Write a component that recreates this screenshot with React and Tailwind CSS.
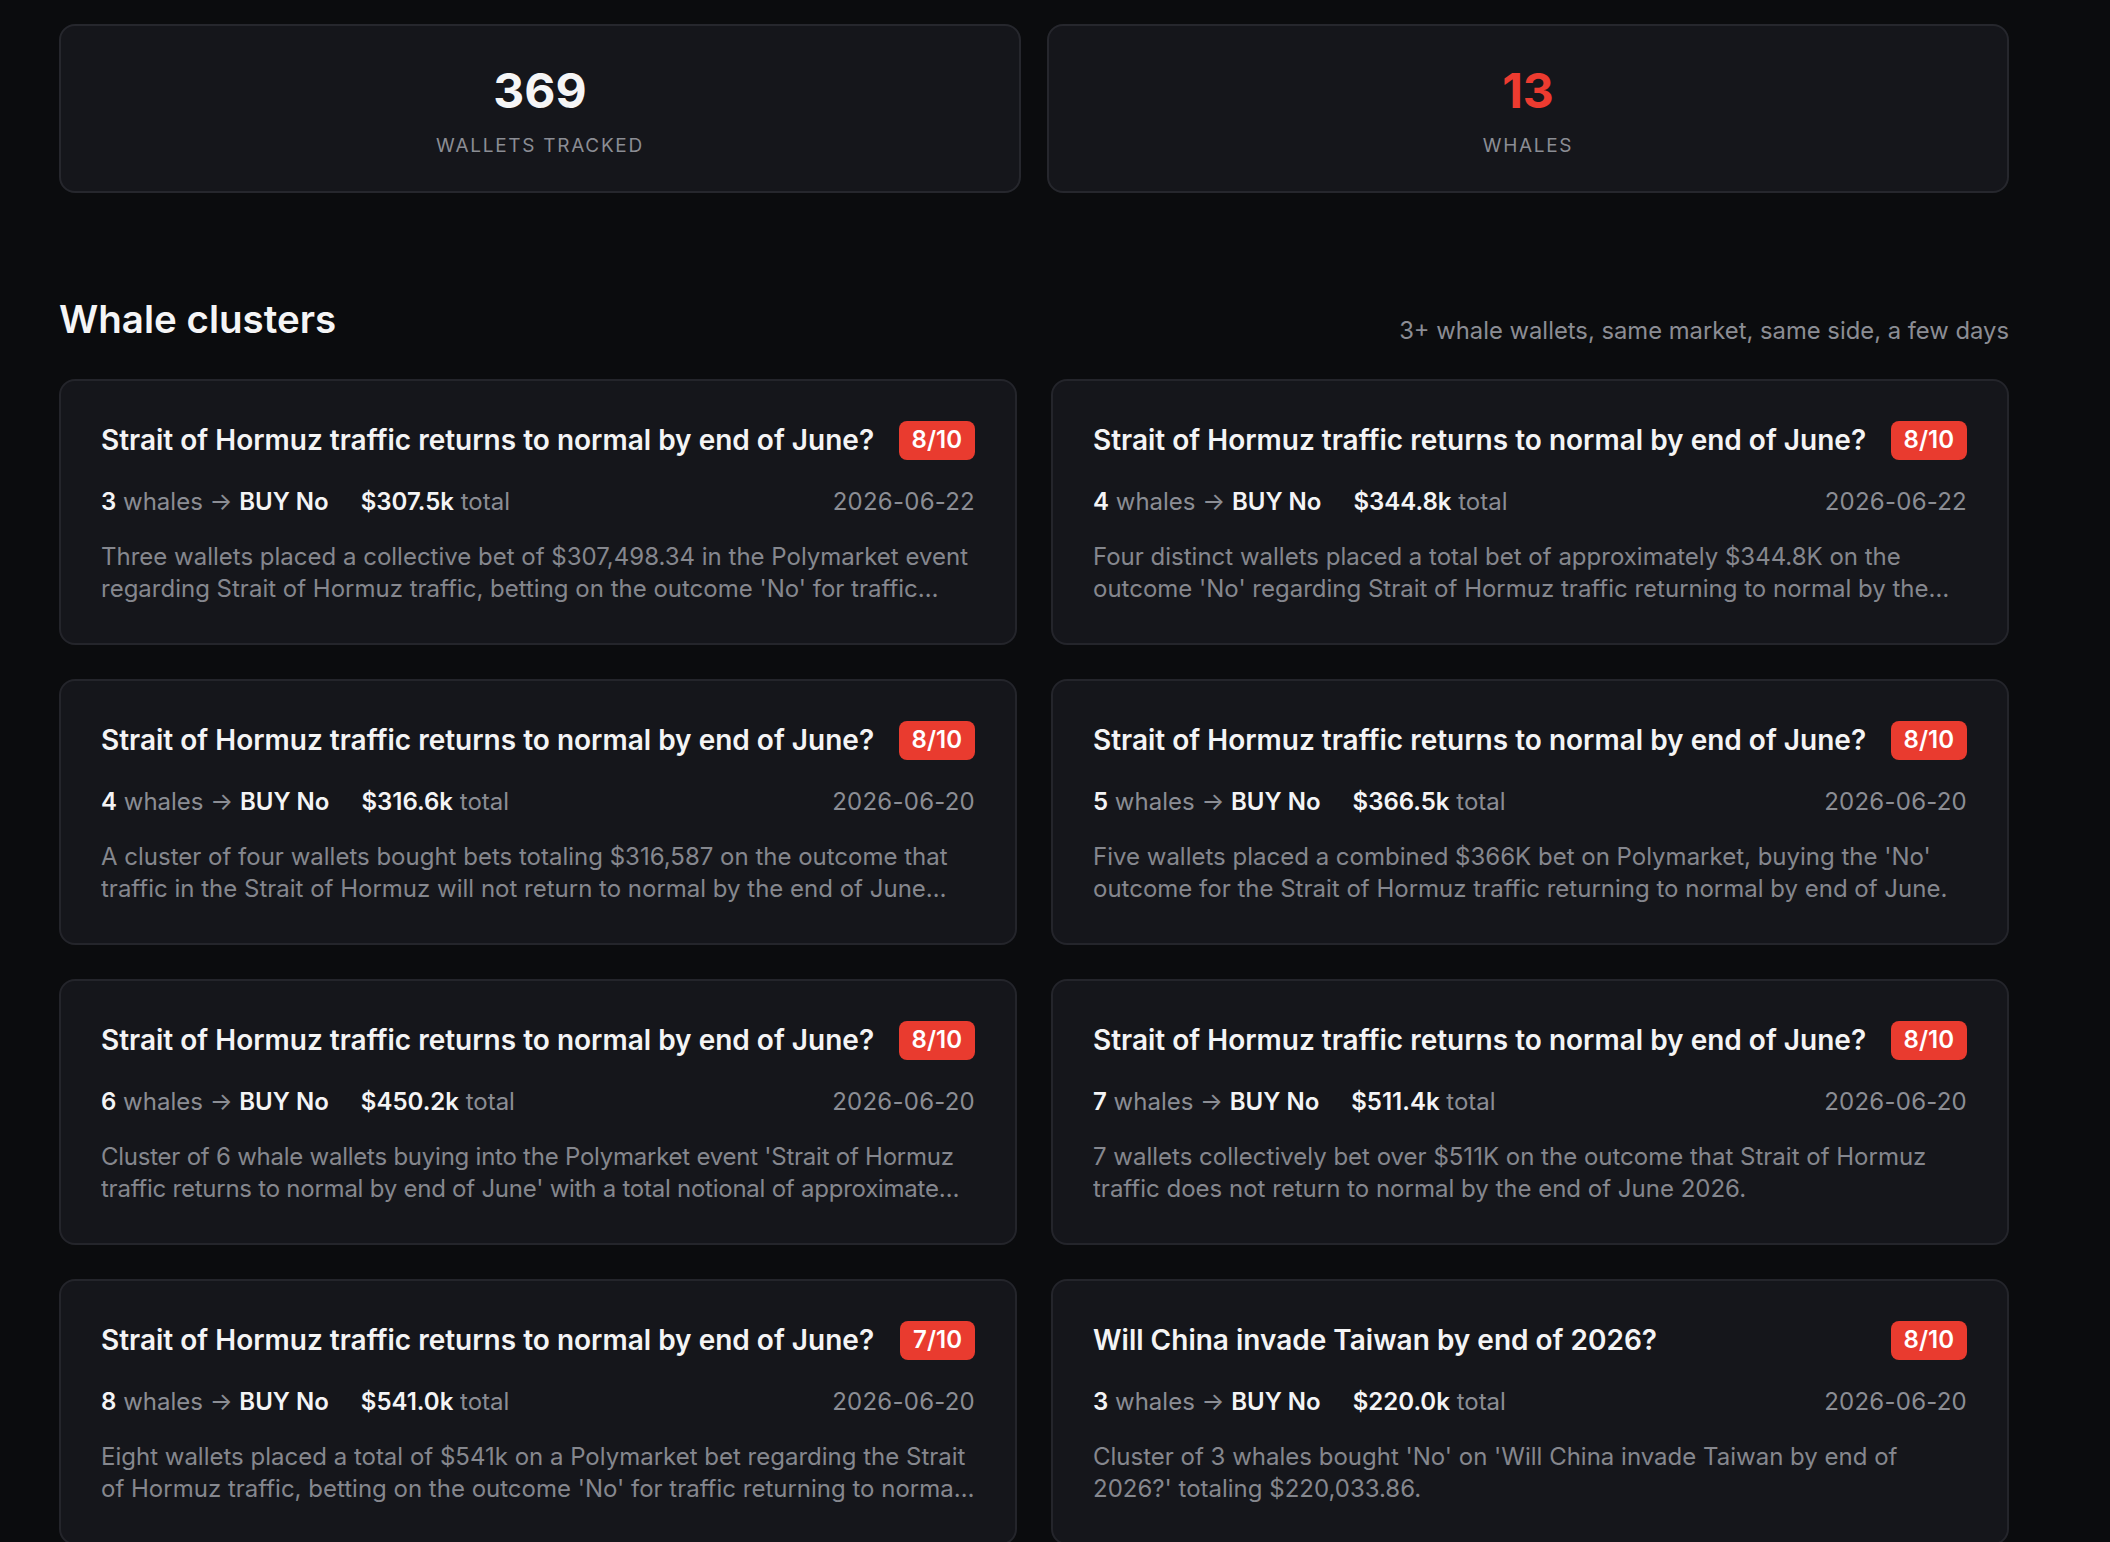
const clusters = [
  {
    title: "Strait of Hormuz traffic returns to normal by end of June?",
    score: "8/10",
    whales: 3,
    total: "$307.5k",
    date: "2026-06-22",
    summary:
      "Three wallets placed a collective bet of $307,498.34 in the Polymarket event regarding Strait of Hormuz traffic, betting on the outcome 'No' for traffic returning to normal by end of June.",
  },
  {
    title: "Strait of Hormuz traffic returns to normal by end of June?",
    score: "8/10",
    whales: 4,
    total: "$344.8k",
    date: "2026-06-22",
    summary:
      "Four distinct wallets placed a total bet of approximately $344.8K on the outcome 'No' regarding Strait of Hormuz traffic returning to normal by the end of June.",
  },
  {
    title: "Strait of Hormuz traffic returns to normal by end of June?",
    score: "8/10",
    whales: 4,
    total: "$316.6k",
    date: "2026-06-20",
    summary:
      "A cluster of four wallets bought bets totaling $316,587 on the outcome that traffic in the Strait of Hormuz will not return to normal by the end of June amid ongoing tensions.",
  },
  {
    title: "Strait of Hormuz traffic returns to normal by end of June?",
    score: "8/10",
    whales: 5,
    total: "$366.5k",
    date: "2026-06-20",
    summary:
      "Five wallets placed a combined $366K bet on Polymarket, buying the 'No' outcome for the Strait of Hormuz traffic returning to normal by end of June.",
  },
  {
    title: "Strait of Hormuz traffic returns to normal by end of June?",
    score: "8/10",
    whales: 6,
    total: "$450.2k",
    date: "2026-06-20",
    summary:
      "Cluster of 6 whale wallets buying into the Polymarket event 'Strait of Hormuz traffic returns to normal by end of June' with a total notional of approximate…",
    tight: true,
  },
  {
    title: "Strait of Hormuz traffic returns to normal by end of June?",
    score: "8/10",
    whales: 7,
    total: "$511.4k",
    date: "2026-06-20",
    summary:
      "7 wallets collectively bet over $511K on the outcome that Strait of Hormuz traffic does not return to normal by the end of June 2026.",
  },
  {
    title: "Strait of Hormuz traffic returns to normal by end of June?",
    score: "7/10",
    whales: 8,
    total: "$541.0k",
    date: "2026-06-20",
    summary:
      "Eight wallets placed a total of $541k on a Polymarket bet regarding the Strait of Hormuz traffic, betting on the outcome 'No' for traffic returning to normal by end of June.",
  },
  {
    title: "Will China invade Taiwan by end of 2026?",
    score: "8/10",
    whales: 3,
    total: "$220.0k",
    date: "2026-06-20",
    summary:
      "Cluster of 3 whales bought 'No' on 'Will China invade Taiwan by end of 2026?' totaling $220,033.86.",
  },
];

function Stat({ value, label, red }) {
  return (
    <div className="flex h-[169px] flex-col items-center rounded-[16px] border-2 border-[#26272d] bg-[#15161b] pt-[41px]">
      <div
        className={
          "text-[48px] font-bold leading-[48px] " +
          (red ? "text-[#ec3b30]" : "text-[#f5f5f6]")
        }
      >
        {value}
      </div>
      <div className="mt-[17px] text-[19px] leading-[28px] tracking-[0.09em] text-[#8b8d94]">
        {label}
      </div>
    </div>
  );
}

function ClusterCard({ c }) {
  return (
    <div className="h-[266px] rounded-[16px] border-2 border-[#24252b] bg-[#15161b] px-[40px] pt-[38px]">
      <div className="flex items-center justify-between gap-6">
        <div className="text-[28px] font-semibold text-[#f4f4f5] whitespace-nowrap">
          {c.title}
        </div>
        <div className="flex h-[39px] items-center rounded-[8px] bg-[#e93b2f] px-[13px] text-[24px] font-semibold text-white">
          {c.score}
        </div>
      </div>
      <div className="mt-[25px] flex justify-between text-[24px] leading-[32px]">
        <div className="flex gap-[32px]">
          <div>
            <span className="font-semibold text-[#f4f4f5]">{c.whales}</span>
            <span className="text-[#8b8d94]"> whales → </span>
            <span className="font-semibold text-[#f4f4f5]">BUY No</span>
          </div>
          <div>
            <span className="font-semibold text-[#f4f4f5]">{c.total}</span>
            <span className="text-[#8b8d94]"> total</span>
          </div>
        </div>
        <div className="text-[#8b8d94] tracking-[0.01em]">{c.date}</div>
      </div>
      <p
        className={
          "mt-[23px] line-clamp-2 text-[24px] leading-[32px] text-[#85878e] " +
          (c.tight ? "tracking-[-0.01em]" : "")
        }
      >
        {c.summary}
      </p>
    </div>
  );
}

export default function App() {
  return (
    <div className="min-h-screen bg-[#0b0c0e] font-['Inter',sans-serif]">
      <div className="ml-[59px] w-[1950px] pt-[24px]">
        <div className="grid grid-cols-2 gap-[26px]">
          <Stat value="369" label="WALLETS TRACKED" />
          <Stat value="13" label="WHALES" red />
        </div>

        <div className="mt-[102px] flex items-end justify-between">
          <h2 className="text-[38.5px] font-semibold leading-[48px] text-[#f5f5f6]">
            Whale clusters
          </h2>
          <div className="text-[23.8px] leading-[24px] text-[#8b8d94]">
            3+ whale wallets, same market, same side, a few days
          </div>
        </div>

        <div className="mt-[36px] grid grid-cols-2 gap-[34px]">
          {clusters.map((c, i) => (
            <ClusterCard key={i} c={c} />
          ))}
        </div>
      </div>
    </div>
  );
}
